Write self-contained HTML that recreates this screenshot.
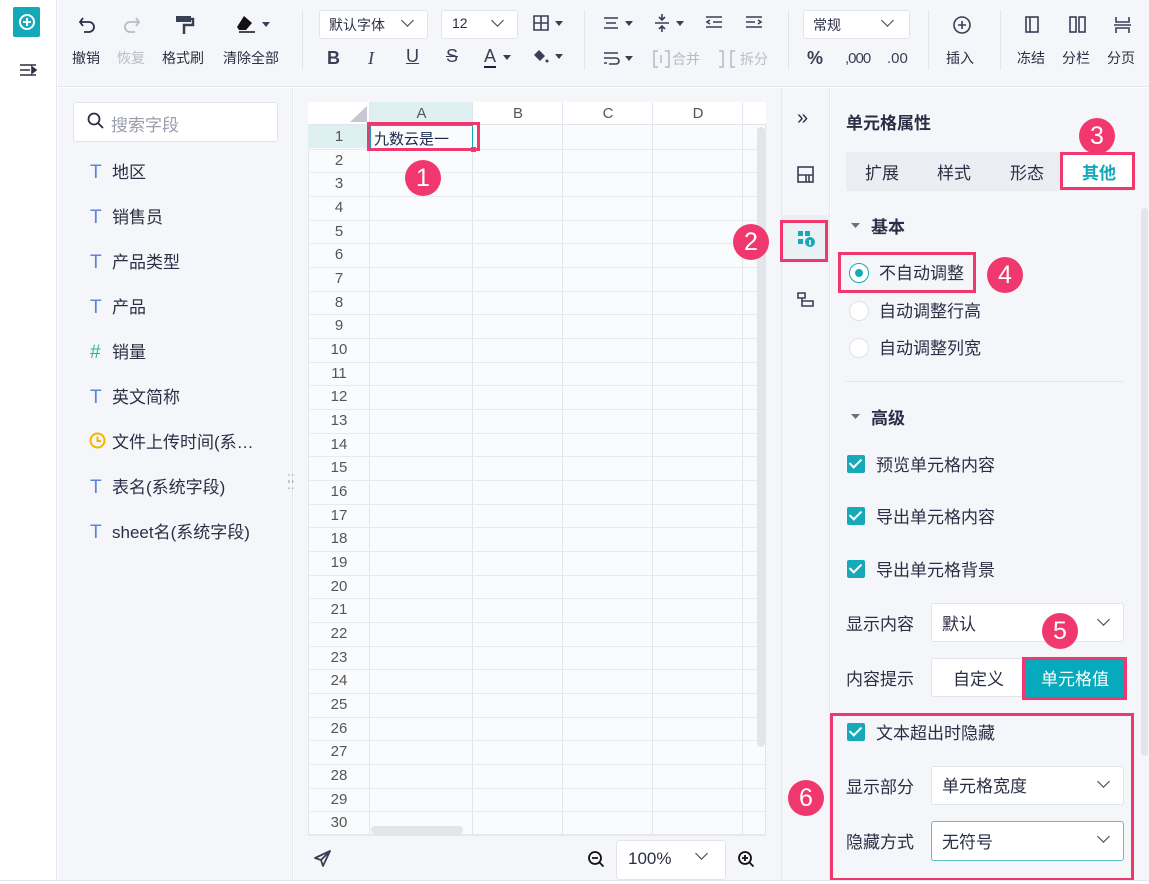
<!DOCTYPE html>
<html><head><meta charset="utf-8"><style>
*{box-sizing:border-box;margin:0;padding:0}
body{width:1149px;height:884px;overflow:hidden;background:#fff;font-family:"Liberation Sans","Noto Sans CJK SC",sans-serif;color:#2b2f45;position:relative;font-size:16px}
.a{position:absolute}
.tb{font-size:14px;color:#2b2f45}
.dis{color:#b8bcc8}
.rn{position:absolute;left:308px;width:62px;text-align:center;font-size:15px;color:#555}
.fld{position:absolute;left:90px;font-size:17px;color:#2b2f45}
.fld i{font-style:normal;color:#5c86d6;display:inline-block;width:22px;font-size:19px}
.sel{position:absolute;background:#fff;border:1px solid #e1e4ea;border-radius:3px}
.chev{position:absolute;width:9px;height:9px;border-right:1.6px solid #3a3f55;border-bottom:1.6px solid #3a3f55;transform:rotate(45deg)}
.badge{position:absolute;width:36px;height:36px;border-radius:50%;background:#f0386e;color:#fff;font-size:25px;text-align:center;line-height:36px}
.hl{position:absolute;border:3px solid #f0386e}
.cb{position:absolute;width:18px;height:18px;background:#17a9b8;border-radius:2px}
.cb:after{content:"";position:absolute;left:5px;top:1px;width:5px;height:10px;border-right:2.5px solid #fff;border-bottom:2.5px solid #fff;transform:rotate(45deg)}
.lbl{position:absolute;font-size:17px;color:#2b2f45}
.radio{position:absolute;width:20px;height:20px;border-radius:50%;border:1px solid #dfe2e8;background:#fff}
</style></head><body>
<div class="a" style="left:0;top:0;width:57px;height:884px;background:#fff;border-right:1px solid #e6e8ee"></div>
<div class="a" style="left:13px;top:7px;width:27px;height:30px;background:#14a9b8;border-radius:2px"></div>
<div class="a" style="left:19px;top:14px;width:16px;height:16px;border:2px solid #fff;border-radius:50%"></div>
<div class="a" style="left:23px;top:21px;width:8px;height:2px;background:#fff"></div>
<div class="a" style="left:26px;top:18px;width:2px;height:8px;background:#fff"></div>
<svg class="a" style="left:19px;top:63px" width="20" height="16"><path d="M1 2h16M1 7h10M1 12h16M13 4l4 3-4 3z" stroke="#2b2f45" stroke-width="1.6" fill="#2b2f45"/></svg>

<div class="a" style="left:58px;top:0;width:1091px;height:87px;background:#f5f6f9;border-bottom:1px solid #e3e5ea"></div>
<svg class="a" style="left:78px;top:15px" width="20" height="20"><path d="M5 3L2 7l3 4M2 7h9a5 5 0 010 10H6" stroke="#2b2f45" stroke-width="1.8" fill="none"/></svg>
<svg class="a" style="left:121px;top:15px" width="20" height="20"><path d="M15 3l3 4-3 4M18 7H9a5 5 0 000 10h5" stroke="#b8bcc8" stroke-width="1.8" fill="none"/></svg>
<svg class="a" style="left:175px;top:14px" width="20" height="22"><rect x="1" y="2" width="15" height="6" fill="#3a3f55"/><path d="M16 5h2v6H9v9" stroke="#3a3f55" stroke-width="2.5" fill="none"/></svg>
<svg class="a" style="left:236px;top:14px" width="34" height="20"><path d="M8 2l8 7-6 7H3l-2-3z" fill="#111"/><path d="M3 18h16" stroke="#111" stroke-width="1.5"/><path d="M26 8h8l-4 5z" fill="#3a3f55"/></svg>
<div class="a tb" style="left:72px;top:48px">撤销</div>
<div class="a tb dis" style="left:117px;top:48px">恢复</div>
<div class="a tb" style="left:162px;top:48px">格式刷</div>
<div class="a tb" style="left:223px;top:48px">清除全部</div>
<div class="a" style="left:302px;top:10px;width:1px;height:60px;background:#e3e5ea"></div>
<div class="sel" style="left:319px;top:10px;width:109px;height:29px"></div><div class="a tb" style="left:329px;top:15px">默认字体</div><div class="chev" style="left:403px;top:16px"></div>
<div class="sel" style="left:441px;top:10px;width:77px;height:29px"></div><div class="a tb" style="left:452px;top:15px">12</div><div class="chev" style="left:493px;top:16px"></div>
<svg class="a" style="left:533px;top:15px" width="34" height="18"><path d="M1 1h14v14H1zM8 1v14M1 8h14" stroke="#3a3f55" stroke-width="1.6" fill="none"/><path d="M22 6h8l-4 5z" fill="#3a3f55"/></svg>
<div class="a" style="left:327px;top:48px;font-weight:bold;font-size:18px;color:#3a3f55">B</div>
<div class="a" style="left:368px;top:48px;font-style:italic;font-size:18px;color:#3a3f55;font-family:'Liberation Serif',serif">I</div>
<div class="a" style="left:406px;top:46px;text-decoration:underline;font-size:18px;color:#3a3f55">U</div>
<div class="a" style="left:446px;top:46px;text-decoration:line-through;font-size:18px;color:#3a3f55">S</div>
<div class="a" style="left:484px;top:46px;font-size:18px;color:#3a3f55;border-bottom:2px solid #1b1f3b;line-height:20px">A</div>
<svg class="a" style="left:503px;top:54px" width="10" height="8"><path d="M0 1h8l-4 5z" fill="#3a3f55"/></svg>
<svg class="a" style="left:533px;top:48px" width="34" height="20"><path d="M6 2l6 6-5 5-6-6z" fill="#3a3f55"/><circle cx="14" cy="13" r="1.5" fill="#3a3f55"/><path d="M22 6h8l-4 5z" fill="#3a3f55"/></svg>
<div class="a" style="left:584px;top:10px;width:1px;height:60px;background:#e3e5ea"></div>
<svg class="a" style="left:603px;top:16px" width="34" height="16"><path d="M1 2h14M3 7h10M1 12h14" stroke="#3a3f55" stroke-width="1.6"/><path d="M22 5h8l-4 5z" fill="#3a3f55"/></svg>
<svg class="a" style="left:654px;top:13px" width="34" height="20"><path d="M1 10h14M8 1v6M5 4l3 3 3-3M8 19v-6M5 16l3-3 3 3" stroke="#3a3f55" stroke-width="1.6" fill="none"/><path d="M22 8h8l-4 5z" fill="#3a3f55"/></svg>
<svg class="a" style="left:705px;top:15px" width="18" height="16"><path d="M1 2h16M8 7h9M1 12h16M5 5l-3 2 3 2" stroke="#3a3f55" stroke-width="1.6" fill="none"/></svg>
<svg class="a" style="left:745px;top:15px" width="18" height="16"><path d="M1 2h16M1 7h9M1 12h16M13 5l3 2-3 2" stroke="#3a3f55" stroke-width="1.6" fill="none"/></svg>
<svg class="a" style="left:603px;top:51px" width="34" height="16"><path d="M1 2h14M1 7h12a3 3 0 010 6H6M1 12h3" stroke="#3a3f55" stroke-width="1.6" fill="none"/><path d="M22 5h8l-4 5z" fill="#3a3f55"/></svg>
<svg class="a" style="left:653px;top:50px" width="18" height="18"><path d="M5 1H1v16h4M12 1h4v16h-4M8 5v8" stroke="#b8bcc8" stroke-width="1.6" fill="none"/></svg>
<div class="a tb dis" style="left:672px;top:49px">合并</div>
<svg class="a" style="left:718px;top:50px" width="18" height="18"><path d="M1 1h4v16H1M17 1h-4v16h4" stroke="#b8bcc8" stroke-width="1.6" fill="none"/></svg>
<div class="a tb dis" style="left:740px;top:49px">拆分</div>
<div class="a" style="left:788px;top:10px;width:1px;height:60px;background:#e3e5ea"></div>
<div class="sel" style="left:803px;top:10px;width:107px;height:29px"></div><div class="a tb" style="left:813px;top:15px">常规</div><div class="chev" style="left:883px;top:16px"></div>
<div class="a" style="left:807px;top:48px;font-size:18px;font-weight:bold;color:#3a3f55">%</div>
<div class="a" style="left:845px;top:50px;font-size:15px;color:#3a3f55;letter-spacing:-1px">,000</div>
<div class="a" style="left:887px;top:50px;font-size:15px;color:#3a3f55">.00</div>
<div class="a" style="left:928px;top:10px;width:1px;height:60px;background:#e3e5ea"></div>
<svg class="a" style="left:952px;top:15px" width="20" height="20"><circle cx="10" cy="10" r="8" stroke="#3a3f55" stroke-width="1.6" fill="none"/><path d="M10 6v8M6 10h8" stroke="#3a3f55" stroke-width="1.6"/></svg>
<div class="a tb" style="left:946px;top:48px">插入</div>
<div class="a" style="left:1000px;top:10px;width:1px;height:60px;background:#e3e5ea"></div>
<svg class="a" style="left:1025px;top:16px" width="16" height="18"><rect x="1" y="1" width="12" height="15" stroke="#3a3f55" stroke-width="1.6" fill="none"/><path d="M5 1v15" stroke="#3a3f55" stroke-width="1.6"/></svg>
<svg class="a" style="left:1069px;top:16px" width="18" height="18"><rect x="1" y="1" width="6" height="15" stroke="#3a3f55" stroke-width="1.6" fill="none"/><rect x="10" y="1" width="6" height="15" stroke="#3a3f55" stroke-width="1.6" fill="none"/></svg>
<svg class="a" style="left:1114px;top:16px" width="18" height="18"><path d="M2 1v5h13V1M2 17v-5h13v5M0 9h17" stroke="#3a3f55" stroke-width="1.6" fill="none"/></svg>
<div class="a tb" style="left:1017px;top:48px">冻结</div>
<div class="a tb" style="left:1062px;top:48px">分栏</div>
<div class="a tb" style="left:1107px;top:48px">分页</div>

<div class="a" style="left:58px;top:88px;width:235px;height:792px;background:#f5f6f9;border-right:1px solid #e6e8ee"></div>
<div class="sel" style="left:73px;top:102px;width:205px;height:40px"></div>
<svg class="a" style="left:87px;top:112px" width="18" height="18"><circle cx="7" cy="7" r="5.5" stroke="#2b2f45" stroke-width="1.8" fill="none"/><path d="M11 11l5 5" stroke="#2b2f45" stroke-width="1.8"/></svg>
<div class="a" style="left:111px;top:111px;font-size:17px;color:#9a9eac">搜索字段</div>
<div class="fld" style="top:158px"><i>T</i>地区</div>
<div class="fld" style="top:203px"><i>T</i>销售员</div>
<div class="fld" style="top:248px"><i>T</i>产品类型</div>
<div class="fld" style="top:293px"><i>T</i>产品</div>
<div class="fld" style="top:338px"><i style="color:#2bb5a0">#</i>销量</div>
<div class="fld" style="top:383px"><i>T</i>英文简称</div>
<div class="fld" style="top:428px"><i></i>文件上传时间(系…</div>
<svg class="a" style="left:89px;top:432px" width="18" height="18"><circle cx="8.5" cy="8.5" r="7" stroke="#f5b400" stroke-width="2" fill="none"/><path d="M8.5 4.5v4.5h3.5" stroke="#f5b400" stroke-width="2" fill="none"/></svg>
<div class="fld" style="top:473px"><i>T</i>表名(系统字段)</div>
<div class="fld" style="top:518px"><i>T</i>sheet名(系统字段)</div>
<div class="a" style="left:287px;top:476px;color:#aaa;font-size:12px;line-height:6px">⁚⁚<br>⁚⁚</div>

<div class="a" style="left:294px;top:88px;width:487px;height:792px;background:#f5f6f9"></div>
<div class="a" style="left:308px;top:102px;width:458px;height:733px;background:#fafbfd;border:1px solid #e3e5ea"></div>
<div class="a" style="left:308px;top:102px;width:458px;height:23px;background:#fff;border-bottom:1px solid #e3e5ea"></div>
<div class="a" style="left:370px;top:102px;width:103px;height:23px;background:#dff0f3"></div>
<div class="a" style="left:308px;top:125px;width:62px;height:23px;background:#dff0f3"></div>
<svg class="a" style="left:350px;top:106px" width="18" height="17"><path d="M17 0v16H0z" fill="#c5c8d2"/></svg>
<div id="grid"></div>
<div class="a" style="left:370px;top:125px;width:103px;height:24px;border:1.5px solid #14a9b8"></div>
<div class="a" style="left:471px;top:147px;width:5px;height:5px;background:#3b82f6"></div>
<div class="a" style="left:374px;top:128px;font-size:15px;color:#1b2a4a">九数云是一</div>
<div class="hl" style="left:367px;top:122px;width:113px;height:29px"></div>
<div class="badge" style="left:405px;top:160px">1</div>
<div class="a" style="left:757px;top:127px;width:8px;height:620px;background:#e4e5e9;border-radius:4px"></div>
<div class="a" style="left:371px;top:826px;width:92px;height:8px;background:#e4e5e9;border-radius:4px"></div>
<svg class="a" style="left:313px;top:849px" width="20" height="20"><path d="M17 2L2 9l6 2 2 6z M8 11l9-9" stroke="#3a3f55" stroke-width="1.8" fill="none" stroke-linejoin="round"/></svg>
<svg class="a" style="left:587px;top:850px" width="20" height="20"><circle cx="8" cy="8" r="6" stroke="#111" stroke-width="1.8" fill="none"/><path d="M5 8h6M12.5 12.5l4 4" stroke="#111" stroke-width="1.8"/></svg>
<div class="sel" style="left:616px;top:840px;width:110px;height:40px"></div>
<div class="a" style="left:628px;top:849px;font-size:17px;color:#2b2f45">100%</div>
<div class="chev" style="left:697px;top:849px"></div>
<svg class="a" style="left:737px;top:850px" width="20" height="20"><circle cx="8" cy="8" r="6" stroke="#111" stroke-width="1.8" fill="none"/><path d="M5 8h6M8 5v6M12.5 12.5l4 4" stroke="#111" stroke-width="1.8"/></svg>

<div class="a" style="left:781px;top:88px;width:49px;height:792px;background:#f5f6f9;border-left:1px solid #e6e8ee;border-right:1px solid #e6e8ee"></div>
<div class="a" style="left:797px;top:107px;font-size:20px;color:#2b2f45">»</div>
<svg class="a" style="left:797px;top:166px" width="18" height="18"><rect x="1" y="1" width="15" height="15" stroke="#3a3f55" stroke-width="1.6" fill="none"/><path d="M1 9h15M9 9v7M12 9v7" stroke="#3a3f55" stroke-width="1.6"/></svg>
<div class="a" style="left:782px;top:215px;width:47px;height:48px;background:#e9f1f4"></div>
<svg class="a" style="left:797px;top:230px" width="20" height="18"><rect x="1" y="1" width="5" height="5" fill="#17a9b8"/><rect x="8" y="1" width="5" height="5" fill="#17a9b8"/><rect x="1" y="9" width="5" height="5" fill="#17a9b8"/><circle cx="13" cy="12" r="5" fill="#17a9b8"/><path d="M13 10v5" stroke="#fff" stroke-width="1.6"/></svg>
<div class="hl" style="left:780px;top:220px;width:48px;height:42px"></div>
<div class="badge" style="left:733px;top:224px">2</div>
<svg class="a" style="left:797px;top:290px" width="18" height="18"><path d="M1 3h7v5H1zM5 8v8h11v-5H5" stroke="#3a3f55" stroke-width="1.6" fill="none"/></svg>

<div class="a" style="left:831px;top:88px;width:318px;height:792px;background:#f5f6f9"></div>
<div class="a" style="left:846px;top:109px;font-size:17px;font-weight:bold;color:#2b2f45">单元格属性</div>
<div class="a" style="left:846px;top:152px;width:288px;height:39px;background:#ebedf2;border-radius:2px"></div>
<div class="a" style="left:865px;top:159px;font-size:17px">扩展</div>
<div class="a" style="left:937px;top:159px;font-size:17px">样式</div>
<div class="a" style="left:1010px;top:159px;font-size:17px">形态</div>
<div class="a" style="left:1062px;top:155px;width:70px;height:34px;background:#fff"></div>
<div class="a" style="left:1082px;top:159px;font-size:17px;font-weight:bold;color:#14a9b8">其他</div>
<div class="hl" style="left:1060px;top:152px;width:75px;height:38px"></div>
<div class="badge" style="left:1079px;top:118px">3</div>
<div class="a" style="left:1141px;top:208px;width:7px;height:548px;background:#e4e5e9;border-radius:4px"></div>
<svg class="a" style="left:851px;top:222px" width="10" height="8"><path d="M0 1h9l-4.5 5z" fill="#6b7080"/></svg>
<div class="a" style="left:871px;top:213px;font-size:17px;font-weight:bold">基本</div>
<div class="radio" style="left:849px;top:263px;border-color:#17a9b8"></div>
<div class="a" style="left:855px;top:269px;width:8px;height:8px;border-radius:50%;background:#17a9b8"></div>
<div class="lbl" style="left:879px;top:259px">不自动调整</div>
<div class="hl" style="left:838px;top:252px;width:138px;height:41px"></div>
<div class="badge" style="left:987px;top:257px">4</div>
<div class="radio" style="left:849px;top:301px"></div>
<div class="lbl" style="left:879px;top:297px">自动调整行高</div>
<div class="radio" style="left:849px;top:338px"></div>
<div class="lbl" style="left:879px;top:334px">自动调整列宽</div>
<div class="a" style="left:846px;top:381px;width:277px;height:1px;background:#e3e5ea"></div>
<svg class="a" style="left:851px;top:413px" width="10" height="8"><path d="M0 1h9l-4.5 5z" fill="#6b7080"/></svg>
<div class="a" style="left:871px;top:404px;font-size:17px;font-weight:bold">高级</div>
<div class="cb" style="left:847px;top:455px"></div><div class="lbl" style="left:876px;top:451px">预览单元格内容</div>
<div class="cb" style="left:847px;top:507px"></div><div class="lbl" style="left:876px;top:503px">导出单元格内容</div>
<div class="cb" style="left:847px;top:560px"></div><div class="lbl" style="left:876px;top:556px">导出单元格背景</div>
<div class="lbl" style="left:846px;top:610px">显示内容</div>
<div class="sel" style="left:931px;top:603px;width:193px;height:39px"></div>
<div class="lbl" style="left:942px;top:610px">默认</div>
<div class="chev" style="left:1099px;top:615px"></div>
<div class="badge" style="left:1042px;top:613px">5</div>
<div class="lbl" style="left:846px;top:665px">内容提示</div>
<div class="sel" style="left:931px;top:658px;width:193px;height:39px"></div>
<div class="lbl" style="left:953px;top:665px">自定义</div>
<div class="a" style="left:1024px;top:659px;width:100px;height:38px;background:#07a9bc"></div>
<div class="lbl" style="left:1041px;top:665px;color:#fff">单元格值</div>
<div class="hl" style="left:1022px;top:657px;width:105px;height:43px"></div>
<div class="cb" style="left:847px;top:723px"></div><div class="lbl" style="left:876px;top:719px">文本超出时隐藏</div>
<div class="lbl" style="left:846px;top:773px">显示部分</div>
<div class="sel" style="left:931px;top:766px;width:193px;height:39px"></div>
<div class="lbl" style="left:942px;top:772px">单元格宽度</div>
<div class="chev" style="left:1099px;top:777px"></div>
<div class="lbl" style="left:846px;top:828px">隐藏方式</div>
<div class="sel" style="left:931px;top:821px;width:193px;height:40px;border-color:#5bc0cc"></div>
<div class="lbl" style="left:942px;top:828px">无符号</div>
<div class="chev" style="left:1099px;top:832px"></div>
<div class="hl" style="left:830px;top:713px;width:304px;height:168px"></div>
<div class="badge" style="left:788px;top:780px">6</div>
<div class="a" style="left:0;top:880px;width:1149px;height:4px;background:#fff;border-top:1px solid #e3e5ea"></div>
<script>
var g=document.getElementById('grid'),h='';
var cols=[[370,103,'A'],[473,90,'B'],[563,90,'C'],[653,90,'D'],[743,23,'']];
cols.forEach(function(c){h+='<div class="a" style="left:'+(c[0]-1)+'px;top:102px;width:1px;height:733px;background:#e3e5ea"></div>';h+='<div class="a" style="left:'+c[0]+'px;top:105px;width:'+c[1]+'px;text-align:center;font-size:15px;color:#555">'+c[2]+'</div>';});
for(var i=1;i<=30;i++){var y=125+(i-1)*23.67;h+='<div class="a" style="left:308px;top:'+(y+23.67)+'px;width:458px;height:1px;background:#e8e9ee"></div>';h+='<div class="rn" style="top:'+(y+3)+'px">'+i+'</div>';}
g.innerHTML=h;
</script>
</body></html>
